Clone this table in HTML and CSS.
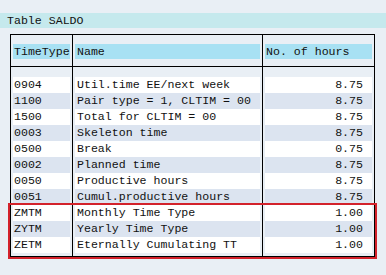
FILE: index.html
```html
<!DOCTYPE html>
<html>
<head>
<meta charset="utf-8">
<link rel="stylesheet" href="styles.css">
</head>
<body>
<div class="title">Table SALDO</div>
<div class="tbl">
  <div class="thead">
    <div class="row">
      <div class="c c1">TimeType</div>
      <div class="c c2">Name</div>
      <div class="c c3h">No. of hours</div>
    </div>
  </div>
  <div class="tbody">
    <div class="row w"><div class="c c1">0904</div><div class="c c2">Util.time EE/next week</div><div class="c c3">8.75</div></div>
    <div class="row b"><div class="c c1">1100</div><div class="c c2">Pair type = 1, CLTIM = 00</div><div class="c c3">8.75</div></div>
    <div class="row w"><div class="c c1">1500</div><div class="c c2">Total for CLTIM = 00</div><div class="c c3">8.75</div></div>
    <div class="row b"><div class="c c1">0003</div><div class="c c2">Skeleton time</div><div class="c c3">8.75</div></div>
    <div class="row w"><div class="c c1">0500</div><div class="c c2">Break</div><div class="c c3">0.75</div></div>
    <div class="row b"><div class="c c1">0002</div><div class="c c2">Planned time</div><div class="c c3">8.75</div></div>
    <div class="row w"><div class="c c1">0050</div><div class="c c2">Productive hours</div><div class="c c3">8.75</div></div>
    <div class="row b"><div class="c c1">0051</div><div class="c c2">Cumul.productive hours</div><div class="c c3">8.75</div></div>
    <div class="row w"><div class="c c1">ZMTM</div><div class="c c2">Monthly Time Type</div><div class="c c3">1.00</div></div>
    <div class="row b"><div class="c c1">ZYTM</div><div class="c c2">Yearly Time Type</div><div class="c c3">1.00</div></div>
    <div class="row w"><div class="c c1">ZETM</div><div class="c c2">Eternally Cumulating TT</div><div class="c c3">1.00</div></div>
  </div>
</div>
<div class="highlight"></div>
</body>
</html>
```
FILE: styles.css
```css
html, body {
  margin: 0;
  padding: 0;
}
body {
  background: #e9eff5;
  width: 386px;
  height: 275px;
  position: relative;
  overflow: hidden;
  font-family: "Liberation Mono", "Courier New", monospace;
  font-size: 11.6px;
  color: #111;
}
.title {
  margin-top: 13px;
  height: 15px;
  line-height: 15px;
  padding-left: 7px;
  background: #c5e9ed;
}
.tbl {
  margin: 6px 0 0 10px;
  width: 363px;
  border: 1px solid #000;
}
.thead, .tbody {
  background:
    linear-gradient(#000, #000) 61px 0 / 1px 100% no-repeat,
    linear-gradient(#000, #000) 251px 0 / 1px 100% no-repeat;
}
.thead {
  padding: 9px 0 7px;
  border-bottom: 1px solid #000;
}
.thead .c {
  background: #a8e1f3;
  height: 15px;
  line-height: 15px;
}
.tbody {
  padding: 10px 0 3px;
}
.row {
  display: grid;
  grid-template-columns: 57px 185px 107px;
  column-gap: 5px;
  padding: 0 2px;
}
.tbody .row {
  height: 16px;
  line-height: 16px;
}
.row.w .c { background: #ffffff; }
.row.b .c { background: #dce4f0; }
.c {
  white-space: nowrap;
  overflow: hidden;
}
.c1 { padding-left: 1px; }
.c2 { padding-left: 2px; }
.c3h { padding-left: 1px; }
.c3 {
  text-align: right;
  padding-right: 9px;
}
.highlight {
  position: absolute;
  left: 8px;
  top: 203px;
  width: 365px;
  height: 52px;
  border: 2px solid #d3222b;
}
```
